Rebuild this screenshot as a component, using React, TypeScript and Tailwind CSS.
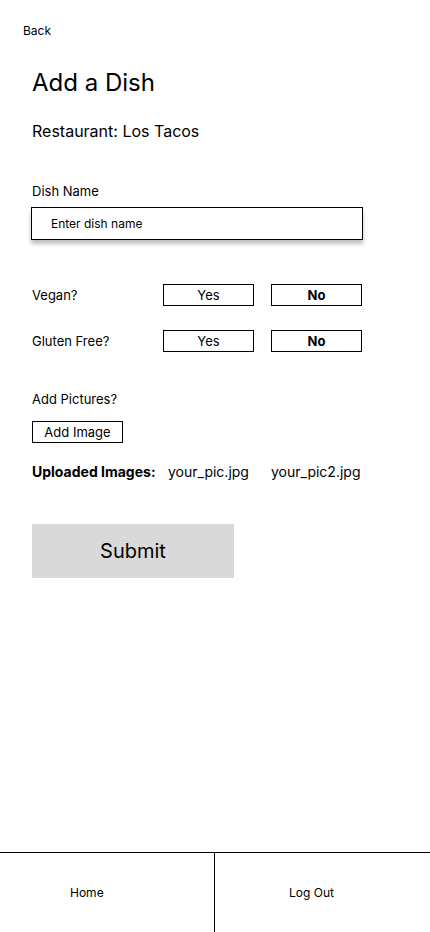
import React, { useState } from 'react';

const font = { fontFamily: 'Inter, "Noto Sans", sans-serif' };

type Choice = 'yes' | 'no';

const ChoiceRow: React.FC<{ label: string; value: Choice; onChange: (v: Choice) => void; className?: string }> = ({
  label,
  value,
  onChange,
  className = '',
}) => (
  <div className={`flex items-center ${className}`}>
    <span className="w-[131px] text-[13px] leading-4 text-black">{label}</span>
    <button
      onClick={() => onChange('yes')}
      className={`h-[22px] w-[91px] border border-black text-[13px] leading-4 text-black ${value === 'yes' ? 'font-bold' : ''}`}
    >
      Yes
    </button>
    <button
      onClick={() => onChange('no')}
      className={`ml-[17px] h-[22px] w-[91px] border border-black text-[13px] leading-4 text-black ${value === 'no' ? 'font-bold' : ''}`}
    >
      No
    </button>
  </div>
);

export default function App() {
  const [name, setName] = useState('');
  const [vegan, setVegan] = useState<Choice>('no');
  const [glutenFree, setGlutenFree] = useState<Choice>('no');
  const images = ['your_pic.jpg', 'your_pic2.jpg'];

  return (
    <div style={font} className="flex min-h-screen flex-col bg-white text-black">
      <div className="flex pl-[23px] pt-[23px]">
        <button className="block text-[12px] leading-4">Back</button>
      </div>

      <div className="px-8">
        <h1 className="mt-[28px] text-[24px] leading-8 font-normal">Add a Dish</h1>
        <p className="mt-[20px] text-[16px] leading-6">Restaurant: Los Tacos</p>

        <label className="mt-10 block text-[13px] leading-4">Dish Name</label>
        <input
          value={name}
          onChange={e => setName(e.target.value)}
          placeholder="Enter dish name"
          className="-ml-px mt-2 block h-[33px] w-[332px] border border-black bg-white pl-[19px] text-[12px] text-black shadow-[0_4px_4px_rgba(0,0,0,0.25)] outline-none placeholder:text-black"
        />

        <ChoiceRow label="Vegan?" value={vegan} onChange={setVegan} className="mt-11" />
        <ChoiceRow label="Gluten Free?" value={glutenFree} onChange={setGlutenFree} className="mt-6" />

        <p className="mt-[39px] text-[13px] leading-4">Add Pictures?</p>
        <button className="mt-[14px] block h-[22px] w-[91px] border border-black text-[13px] leading-4">Add Image</button>

        <div className="mt-[21px] flex items-center text-[14px] leading-4">
          <span className="w-[136px] font-bold">Uploaded Images:</span>
          <span className="w-[103px]">{images[0]}</span>
          <span>{images[1]}</span>
        </div>

        <button className="mt-11 block h-[54px] w-[202px] bg-[#d9d9d9] text-[20px] leading-7">Submit</button>
      </div>

      <nav className="mt-auto flex h-20 border-t border-black text-[12px] leading-4">
        <button className="flex w-[215px] items-center border-r border-black pl-[70px]">Home</button>
        <button className="flex flex-1 items-center pl-[74px]">Log Out</button>
      </nav>
    </div>
  );
}
